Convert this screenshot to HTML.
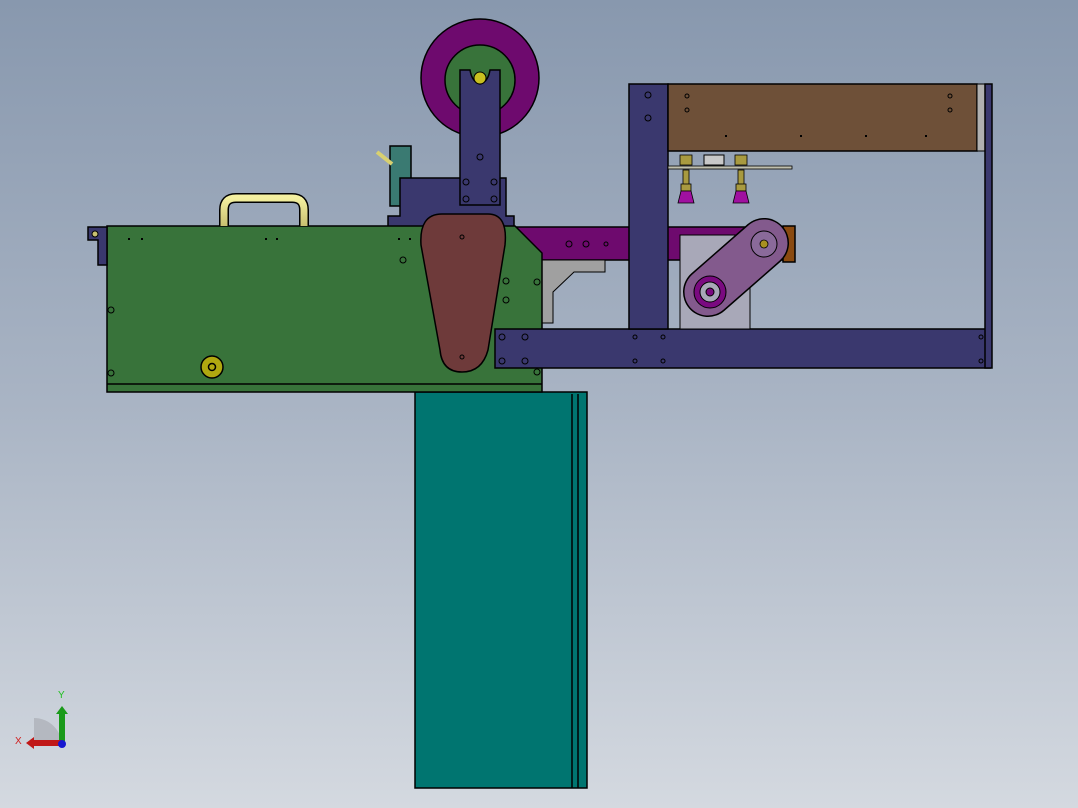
<!DOCTYPE html>
<html><head><meta charset="utf-8"><style>
html,body{margin:0;padding:0;width:1078px;height:808px;overflow:hidden}
svg{display:block}
</style></head><body>
<svg width="1078" height="808" viewBox="0 0 1078 808" xmlns="http://www.w3.org/2000/svg">
<defs>
<linearGradient id="bg" x1="0" y1="0" x2="0" y2="1">
<stop offset="0" stop-color="#8898ae"/><stop offset="0.5" stop-color="#a9b4c4"/><stop offset="1" stop-color="#d4d9e0"/>
</linearGradient>
<linearGradient id="hd" x1="0" y1="0" x2="0" y2="1">
<stop offset="0" stop-color="#f4f0a0"/><stop offset="1" stop-color="#c8c070"/>
</linearGradient>
</defs>
<rect width="1078" height="808" fill="url(#bg)"/>
<g stroke="#000" stroke-width="1.5">
<rect x="415" y="392" width="172" height="396" fill="#007570"/>
<line x1="572" y1="394" x2="572" y2="788"/><line x1="578" y1="394" x2="578" y2="788"/>
<circle cx="480" cy="78" r="59" fill="#6e0a6e"/>
<circle cx="480" cy="80" r="35" fill="#38733a"/>
<rect x="390" y="146" width="21" height="60" fill="#3a7a72"/>
<line x1="377" y1="152" x2="392" y2="164" stroke="#d8d070" stroke-width="4"/>
<path d="M400 178H506V216H514V228H388V216H400Z" fill="#3a386e"/>
<path d="M460 70H470Q472 82 480 84Q488 82 490 70H500V205H460Z" fill="#3a386e"/>
<circle cx="480" cy="78" r="6" fill="#c8c020" stroke-width="1"/>
<rect x="512" y="227" width="278" height="33" fill="#6e0a6e"/>
<rect x="783" y="226" width="12" height="36" fill="#8a4a10"/>
<path d="M540 260H605V272H574L553 292V323H540Z" fill="#a0a0a0" stroke-width="1"/>
<path d="M107 226H515L542 253V392H107Z" fill="#38733a"/>
<line x1="107" y1="384" x2="542" y2="384"/>
<path d="M98 227H107V265H98V240H88V227Z" fill="#3a386e"/>
<circle cx="95" cy="234" r="3" fill="#c8c070" stroke-width="1"/>
<circle cx="212" cy="367" r="11" fill="#b0a810"/>
<circle cx="212" cy="367" r="3.5" fill="#b0a810"/>
<path d="M224 226V210Q224 198 236 198H292Q304 198 304 210V226" fill="none" stroke="#000" stroke-width="10"/>
<path d="M224 226V210Q224 198 236 198H292Q304 198 304 210V226" fill="none" stroke="url(#hd)" stroke-width="7"/>
<path d="M442 214H488Q508 214 505 245L488 350Q482 372 462 372Q442 372 440 350L421 245Q419 214 442 214Z" fill="#6e3a3a"/>
<rect x="495" y="329" width="495" height="39" fill="#3a386e"/>
<rect x="629" y="84" width="39" height="245" fill="#3a386e"/>
<rect x="668" y="84" width="309" height="67" fill="#6e5038"/>
<rect x="977" y="84" width="8" height="67" fill="#b0b0b0" stroke-width="1"/>
<rect x="985" y="84" width="7" height="284" fill="#3a386e"/>
<rect x="680" y="235" width="70" height="94" fill="#a8a8b8" stroke-width="1"/>
<rect x="668" y="166" width="124" height="3" fill="#c0c0b0" stroke-width="0.8"/>
<rect x="704" y="155" width="20" height="10" fill="#c8c8c8" stroke-width="1"/>
</g>
<line x1="708" y1="292" x2="764" y2="243" stroke="#000" stroke-width="50" stroke-linecap="round"/>
<line x1="708" y1="292" x2="764" y2="243" stroke="#9a6aa6" stroke-opacity="0.85" stroke-width="47" stroke-linecap="round"/>
<g stroke="#000" stroke-width="1">
<circle cx="710" cy="292" r="16" fill="#7a0a80"/>
<circle cx="710" cy="292" r="10" fill="#a8a8b8"/>
<circle cx="710" cy="292" r="4" fill="#7a0a80"/>
<circle cx="764" cy="244" r="13" fill="#8a6a9a"/>
<circle cx="764" cy="244" r="4" fill="#a89020" stroke-width="0.8"/>
<g fill="#a89a40" stroke-width="0.8">
<rect x="680" y="155" width="12" height="10"/><rect x="735" y="155" width="12" height="10"/>
<rect x="683" y="170" width="6" height="18"/><rect x="738" y="170" width="6" height="18"/>
<rect x="681" y="184" width="10" height="7"/><rect x="736" y="184" width="10" height="7"/>
</g>
<g fill="#a010a0" stroke-width="0.8">
<path d="M681 191H691L694 203H678Z"/><path d="M736 191H746L749 203H733Z"/>
</g>
</g>
<g fill="none" stroke="#000" stroke-width="1">
<circle cx="480" cy="157" r="3"/><circle cx="466" cy="182" r="3"/><circle cx="494" cy="182" r="3"/><circle cx="466" cy="199" r="3"/><circle cx="494" cy="199" r="3"/>
<circle cx="403" cy="260" r="3"/><circle cx="506" cy="281" r="3"/><circle cx="506" cy="300" r="3"/><circle cx="537" cy="282" r="3"/><circle cx="537" cy="372" r="3"/>
<circle cx="111" cy="310" r="3"/><circle cx="111" cy="373" r="3"/>
<circle cx="502" cy="337" r="3"/><circle cx="525" cy="337" r="3"/><circle cx="502" cy="361" r="3"/><circle cx="525" cy="361" r="3"/>
<circle cx="569" cy="244" r="3"/><circle cx="586" cy="244" r="3"/><circle cx="606" cy="244" r="2"/>
<circle cx="635" cy="337" r="2"/><circle cx="663" cy="337" r="2"/><circle cx="635" cy="361" r="2"/><circle cx="663" cy="361" r="2"/>
<circle cx="981" cy="337" r="2"/><circle cx="981" cy="361" r="2"/>
<circle cx="687" cy="96" r="2"/><circle cx="687" cy="110" r="2"/><circle cx="950" cy="96" r="2"/><circle cx="950" cy="110" r="2"/>
<circle cx="648" cy="95" r="3"/><circle cx="648" cy="118" r="3"/>
<circle cx="462" cy="237" r="2"/><circle cx="462" cy="357" r="2"/>
</g>
<g fill="#000">
<rect x="128" y="238" width="2" height="2"/><rect x="141" y="238" width="2" height="2"/>
<rect x="265" y="238" width="2" height="2"/><rect x="276" y="238" width="2" height="2"/>
<rect x="398" y="238" width="2" height="2"/><rect x="409" y="238" width="2" height="2"/>
<rect x="725" y="135" width="2" height="2"/><rect x="800" y="135" width="2" height="2"/><rect x="865" y="135" width="2" height="2"/><rect x="925" y="135" width="2" height="2"/>
</g>
<path d="M62 746A28 28 0 0 0 34 718L34 746Z" fill="#b4b8c0"/>
<rect x="59" y="712" width="6" height="32" fill="#1a9a1a"/>
<path d="M56 714L62 706L68 714Z" fill="#1a9a1a"/>
<rect x="32" y="740" width="30" height="6" fill="#c01818"/>
<path d="M34 737L26 743L34 749Z" fill="#c01818"/>
<circle cx="62" cy="744" r="4" fill="#1818d0"/>
<text x="58" y="698" font-family="Liberation Sans,sans-serif" font-size="10" fill="#20c020">Y</text>
<text x="15" y="744" font-family="Liberation Sans,sans-serif" font-size="10" fill="#d02020">X</text>
</svg>
</body></html>
